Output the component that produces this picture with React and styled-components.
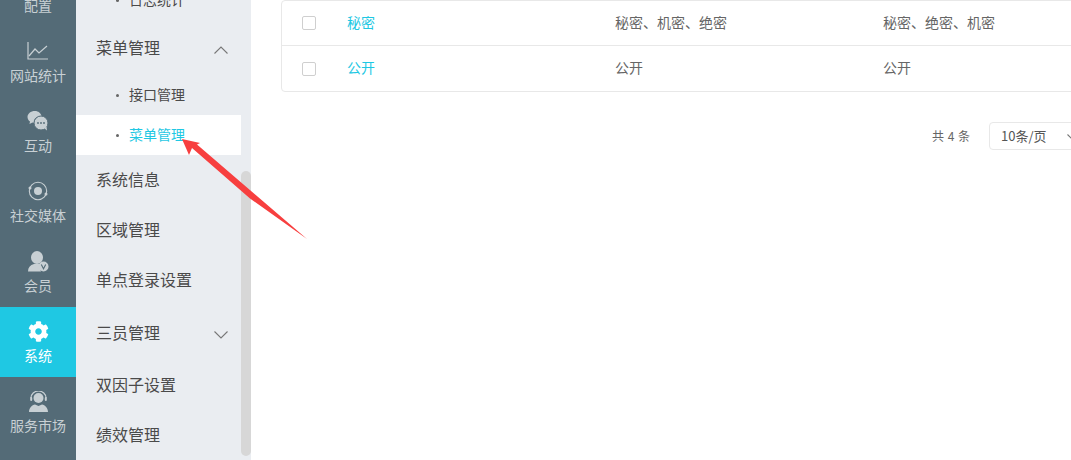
import React from 'react';
import styled, { createGlobalStyle } from 'styled-components';
import { FaCog } from 'react-icons/fa';

const FONT = '"Noto Sans CJK SC", "Liberation Sans", sans-serif';

const GlobalStyle = createGlobalStyle`
  html, body { margin: 0; padding: 0; height: 100%; overflow: hidden; background: #fff; }
  #root { height: 100%; }
  * { box-sizing: border-box; }
`;

const Page = styled.div`
  position: relative;
  display: flex;
  width: 1071px;
  height: 460px;
  overflow: hidden;
  font-family: ${FONT};
`;

const Rail = styled.nav`
  flex: 0 0 76px;
  height: 460px;
  overflow: hidden;
  background: #546b77;
`;

const RailList = styled.div`
  margin-top: -43px;
`;

const RailItem = styled.div`
  height: 70px;
  display: flex;
  flex-direction: column;
  align-items: center;
  padding-top: 12px;
  color: ${p => (p.$active ? '#fff' : '#c8d0d4')};
  background: ${p => (p.$active ? '#1fc8e3' : 'transparent')};
  font-size: 14px;
  line-height: 20px;
`;

const RailIcon = styled.div`
  height: 24px;
  margin-bottom: 2px;
  display: flex;
  align-items: center;
  justify-content: center;
  font-size: 21px;
`;

const SubPanel = styled.aside`
  position: relative;
  flex: 0 0 175px;
  height: 460px;
  overflow: hidden;
  background: #eaedf1;
`;

const SubList = styled.div`
  width: 165px;
  margin-top: -20px;
`;

const SubRow = styled.div`
  height: ${p => (p.$group ? 55 : 50)}px;
  display: flex;
  align-items: center;
  justify-content: space-between;
  padding: 0 13px 2px 20px;
  color: #4a4a4a;
  font-size: 16px;
`;

const ChildRow = styled.div`
  height: 40px;
  display: flex;
  align-items: center;
  padding: 0 0 2px 40px;
  font-size: 14px;
  color: ${p => (p.$active ? '#1fc8e3' : '#4a4a4a')};
  background: ${p => (p.$active ? '#fff' : 'transparent')};
  &::before {
    content: '';
    width: 3px;
    height: 3px;
    margin: 2px 10px 0 0;
    border-radius: 50%;
    background: #666;
  }
`;

const Thumb = styled.div`
  position: absolute;
  right: 0;
  top: 171px;
  width: 10px;
  height: 285px;
  border-radius: 5px;
  background: #d7d7d7;
`;

const Main = styled.main`
  flex: 1;
  min-width: 0;
  padding-left: 30px;
`;

const Table = styled.div`
  width: 830px;
  border: 1px solid #e8e8e8;
  border-radius: 4px;
`;

const Row = styled.div`
  height: 44px;
  display: grid;
  grid-template-columns: 65px 268px 268px 1fr;
  align-items: center;
  font-size: 14px;
  color: #666;
  & + & { height: 46px; border-top: 1px solid #e8e8e8; }
`;

const CheckCell = styled.div`
  padding-left: 20px;
  display: flex;
`;

const CheckBox = styled.span`
  width: 14px;
  height: 14px;
  border: 1px solid #cfcfcf;
  border-radius: 2px;
  background: #fff;
`;

const TextCell = styled.div`
  padding-bottom: 3px;
  color: ${p => (p.$link ? '#1fc8e3' : '#666')};
`;

const Pager = styled.div`
  display: flex;
  align-items: center;
  margin-top: 30px;
  padding-left: 651px;
  font-size: 12px;
  color: #666;
  white-space: nowrap;
`;

const Total = styled.span`
  flex: 0 0 57px;
  padding-bottom: 2px;
  word-spacing: 1px;
`;

const PageSize = styled.div`
  flex: 0 0 104px;
  height: 28px;
  display: flex;
  align-items: center;
  justify-content: space-between;
  padding: 0 11px 2px 11px;
  border: 1px solid #e8e8e8;
  border-radius: 4px;
  font-size: 13px;
  color: #555;
`;

const Chevron = styled.svg`
  flex: none;
  margin-top: 6px;
`;

const Arrow = styled.svg`
  position: absolute;
  left: 176px;
  top: 130px;
`;

const Chev = ({ up }) => (
  <Chevron width="14" height="8" viewBox="0 0 14 8" fill="none" stroke="#777" strokeWidth="1.1">
    <path d={up ? 'M.5 7.500 L7 1 L13.500 7.500' : 'M.5 .5 L7 7 L13.500 .5'} />
  </Chevron>
);

const ChartIcon = () => (
  <svg width="22" height="18" viewBox="0 0 22 18" fill="none" stroke="#c8d0d4" strokeWidth="1.2">
    <path d="M1 0V17H21" />
    <path d="M2 14L8 7L12 11L20 4" />
  </svg>
);

const ChatIcon = () => (
  <svg width="22" height="20" viewBox="0 0 22 20" fill="#c8d0d4">
    <path d="M8 0C3.600 0 .5 2.700.5 6c0 1.900 1 3.500 2.500 4.600L2.500 13l3-1.500c.5.100 1 .2 1.500.2C6.700 7.500 10 5 14.800 5.400 13.900 2.200 11.300 0 8 0z" />
    <circle cx="14" cy="12" r="7" stroke="#546b77" strokeWidth="1" />
    <path d="M17 17l3 2.500-.5-4z" />
    <circle cx="11" cy="12" r=".9" fill="#546b77" />
    <circle cx="14" cy="12" r=".9" fill="#546b77" />
    <circle cx="17" cy="12" r=".9" fill="#546b77" />
  </svg>
);

const OrbitIcon = () => (
  <svg width="20" height="20" viewBox="0 0 20 20" fill="none" stroke="#c8d0d4">
    <circle cx="10" cy="10" r="8.700" strokeWidth="1.100" />
    <circle cx="10" cy="10" r="4" fill="#c8d0d4" stroke="none" />
    <circle cx="2" cy="7" r="1.500" fill="#c8d0d4" stroke="none" />
    <circle cx="18" cy="13" r="1.500" fill="#c8d0d4" stroke="none" />
  </svg>
);

const MemberIcon = () => (
  <svg width="21" height="21" viewBox="0 0 21 21" fill="#c8d0d4">
    <ellipse cx="9" cy="6.500" rx="6" ry="6.500" />
    <path d="M0 20.500c0-4 2-6.500 6-7.500h6c1 .3 1.700.7 2 1-2 2-2 4.500-1 6.500z" />
    <circle cx="15.500" cy="15.500" r="5" />
    <path d="M13.300 13.500l2.200 4.200 2.200-4.200" fill="none" stroke="#546b77" strokeWidth="1.100" />
  </svg>
);

const ServiceIcon = () => (
  <svg width="21" height="21" viewBox="0 0 21 21" fill="#c8d0d4">
    <circle cx="10.500" cy="7" r="5" />
    <path d="M3 7a7.500 7 0 0 1 15 0" fill="none" stroke="#c8d0d4" strokeWidth="1.200" />
    <rect x="2.200" y="6" width="2" height="4" rx="1" />
    <rect x="16.800" y="6" width="2" height="4" rx="1" />
    <path d="M1 21c0-4 3-7 6-7.500l3.500 1.500 3.500-1.500c3 .5 6 3.500 6 7.500z" />
  </svg>
);

const railItems = [
  { label: '配置', icon: null },
  { label: '网站统计', icon: <ChartIcon /> },
  { label: '互动', icon: <ChatIcon /> },
  { label: '社交媒体', icon: <OrbitIcon /> },
  { label: '会员', icon: <MemberIcon /> },
  { label: '系统', icon: <FaCog />, active: true },
  { label: '服务市场', icon: <ServiceIcon /> },
];

const rows = [
  ['秘密', '秘密、机密、绝密', '秘密、绝密、机密'],
  ['公开', '公开', '公开'],
];

export default function App() {
  return (
    <Page>
      <GlobalStyle />
      <Rail>
        <RailList>
          {railItems.map(item => (
            <RailItem key={item.label} $active={item.active}>
              <RailIcon>{item.icon}</RailIcon>
              {item.label}
            </RailItem>
          ))}
        </RailList>
      </Rail>

      <SubPanel>
        <SubList>
          <ChildRow>日志统计</ChildRow>
          <SubRow $group>菜单管理<Chev up /></SubRow>
          <ChildRow>接口管理</ChildRow>
          <ChildRow $active>菜单管理</ChildRow>
          <SubRow>系统信息</SubRow>
          <SubRow>区域管理</SubRow>
          <SubRow>单点登录设置</SubRow>
          <SubRow $group>三员管理<Chev /></SubRow>
          <SubRow>双因子设置</SubRow>
          <SubRow>绩效管理</SubRow>
        </SubList>
        <Thumb />
      </SubPanel>

      <Main>
        <Table>
          {rows.map(r => (
            <Row key={r[0]}>
              <CheckCell><CheckBox /></CheckCell>
              <TextCell $link>{r[0]}</TextCell>
              <TextCell>{r[1]}</TextCell>
              <TextCell>{r[2]}</TextCell>
            </Row>
          ))}
        </Table>
        <Pager>
          <Total>共 4 条</Total>
          <PageSize>
            10条/页
            <Chev />
          </PageSize>
        </Pager>
      </Main>

      <Arrow width="140" height="115" viewBox="176 130 140 115">
        <path d="M182 139L200 143L197 144.500L307 239L250 198.500L192 148L189 155z" fill="#f73f3f" />
      </Arrow>
    </Page>
  );
}
